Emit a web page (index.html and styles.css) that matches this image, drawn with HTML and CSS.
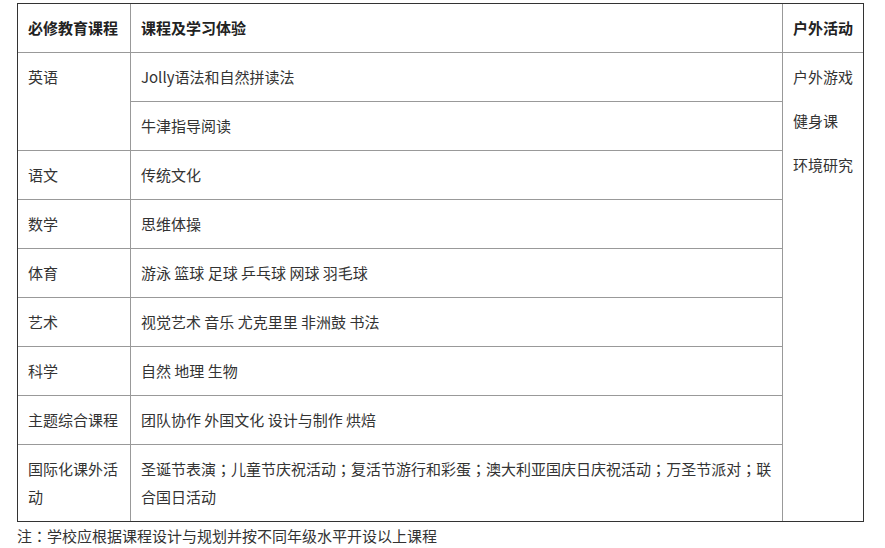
FILE: index.html
```html
<!DOCTYPE html>
<html lang="zh-CN">
<head>
<meta charset="utf-8">
<title>课程</title>
<link rel="stylesheet" href="styles.css">
</head>
<body>
<div class="page">
  <table class="course">
    <thead>
      <tr>
        <th class="c1">必修教育课程</th>
        <th class="c2">课程及学习体验</th>
        <th class="c3 last-col">户外活动</th>
      </tr>
    </thead>
    <tbody>
      <tr>
        <td rowspan="2">英语</td>
        <td>Jolly语法和自然拼读法</td>
        <td rowspan="9" class="last-col last-row outdoor">
          <p>户外游戏</p>
          <p>健身课</p>
          <p>环境研究</p>
        </td>
      </tr>
      <tr><td>牛津指导阅读</td></tr>
      <tr><td>语文</td><td>传统文化</td></tr>
      <tr><td>数学</td><td>思维体操</td></tr>
      <tr><td>体育</td><td>游泳 篮球 足球 乒乓球 网球 羽毛球</td></tr>
      <tr><td>艺术</td><td>视觉艺术 音乐 尤克里里 非洲鼓 书法</td></tr>
      <tr><td>科学</td><td>自然 地理 生物</td></tr>
      <tr><td>主题综合课程</td><td>团队协作 外国文化 设计与制作 烘焙</td></tr>
      <tr>
        <td class="last-row">国际化课外活动</td>
        <td class="last-row">圣诞节表演<span class="punct" lang="zh-TW">；</span>儿童节庆祝活动<span class="punct" lang="zh-TW">；</span>复活节游行和彩蛋<span class="punct" lang="zh-TW">；</span>澳大利亚国庆日庆祝活动<span class="punct" lang="zh-TW">；</span>万圣节派对<span class="punct" lang="zh-TW">；</span>联合国日活动</td>
      </tr>
    </tbody>
  </table>
  <p class="note">注<span class="punct" lang="zh-TW">：</span>学校应根据课程设计与规划并按不同年级水平开设以上课程</p>
</div>
</body>
</html>
```

FILE: styles.css
```css
html, body {
  margin: 0;
  padding: 0;
  background: #fff;
}

body {
  font-family: "Noto Sans CJK SC", "Microsoft YaHei", sans-serif;
  font-size: 15px;
  color: #333;
}

.page {
  padding: 3px 0 0 17px;
}

.course {
  border-collapse: separate;
  border-spacing: 0;
  border: 1px solid #333;
  table-layout: fixed;
  width: 847px;
}

.course th,
.course td {
  box-sizing: border-box;
  padding: 10px 10px;
  line-height: 28px;
  text-align: left;
  vertical-align: top;
  border-right: 1px solid #999;
  border-bottom: 1px solid #999;
  font-weight: normal;
}

.course th {
  font-weight: bold;
  color: #222;
}

.course .c1 { width: 113px; }
.course .c2 { width: 652px; }
.course .c3 { width: 80px; }

.course .last-col { border-right: none; }
.course .last-row { border-bottom: none; }

.outdoor p {
  margin: 0 0 16px 0;
}

.punct {
  font-family: "Noto Sans CJK TC", "Noto Sans CJK SC", sans-serif;
}

.note {
  margin: 0;
  line-height: 28px;
}
```
